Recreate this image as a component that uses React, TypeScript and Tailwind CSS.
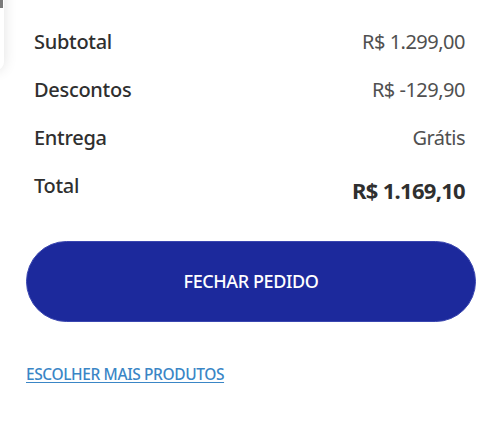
const rows = [
  { label: "Subtotal", value: "R$ 1.299,00" },
  { label: "Descontos", value: "R$ -129,90" },
  { label: "Entrega", value: "Grátis" },
]

export default function App() {
  return (
    <div
      className="relative w-[500px] h-[426px] overflow-hidden bg-white"
      style={{ fontFamily: '"Noto Sans", "Open Sans", sans-serif' }}
    >
      {/* edge of the card behind */}
      <div className="absolute -left-[200px] -top-[20px] w-[204px] h-[90px] rounded-lg bg-white shadow-[0_0_14px_rgba(0,0,0,0.12)]">
        <div className="absolute right-[1px] top-[20px] w-[3px] h-[8px] bg-[#7a7a7a]"></div>
      </div>

      <div className="pl-[26px] pr-[24px] pt-[18px]">
        <div className="pl-[8px] pr-[11px]">
          {rows.map((row) => (
            <div key={row.label} className="flex h-12 items-center justify-between">
              <span className="text-[20px] font-medium tracking-[-0.3px] text-[#2f2f2f]">{row.label}</span>
              <span className="text-[20px] tracking-[-0.5px] text-[#505050]">{row.value}</span>
            </div>
          ))}
          <div className="flex h-12 items-center justify-between">
            <span className="text-[20px] font-medium tracking-[-0.3px] text-[#2f2f2f]">Total</span>
            <span className="mt-2 text-[22px] font-bold tracking-[-0.7px] text-[#2f2f2f]">R$ 1.169,10</span>
          </div>
        </div>

        <button className="mt-[31px] flex h-[81px] w-full items-center justify-center rounded-full border border-[#3a46b0] bg-[#1c299c] text-[18px] font-medium tracking-[-0.4px] text-white">
          FECHAR PEDIDO
        </button>

        <a
          href="#"
          className="mt-[41px] inline-block text-[15.5px] font-medium tracking-[-0.4px] text-[#3a86c6] underline underline-offset-2"
        >
          ESCOLHER MAIS PRODUTOS
        </a>
      </div>
    </div>
  )
}
